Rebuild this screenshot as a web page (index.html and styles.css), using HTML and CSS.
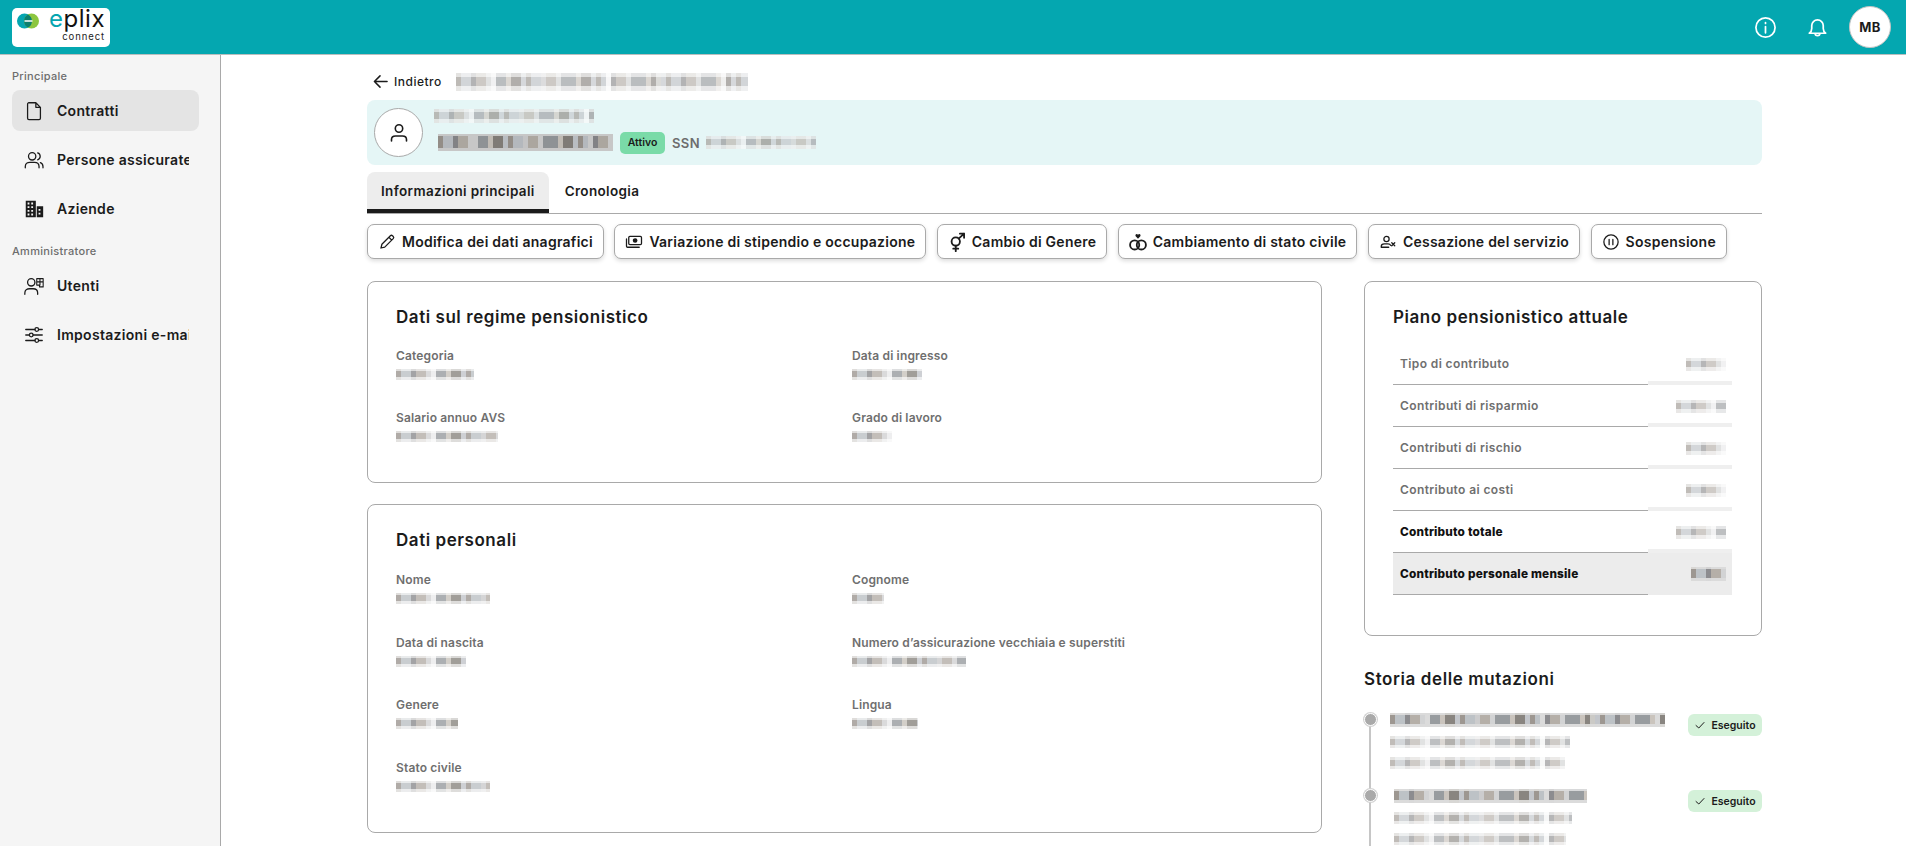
FILE: index.html
```html
<!DOCTYPE html>
<html lang="it">
<head>
<meta charset="utf-8">
<title>eplix connect</title>
<link rel="stylesheet" href="styles.css">
</head>
<body>
<header class="topbar">
  <a class="logo">
    <svg class="logo-mark" viewBox="0 0 22 16" width="22" height="16"><circle cx="7.500" cy="8" r="7.500" fill="#05a5b0"/><circle cx="14.500" cy="8" r="7.500" fill="#8cc63f"/><path d="M11 1.400a7.500 7.500 0 0 1 0 13.200a7.500 7.500 0 0 1 0-13.200z" fill="#0b7f6e"/><path d="M8 8h7" stroke="#fff" stroke-width="1.400"/></svg>
    <span class="logo-words"><span class="logo-name"><span class="logo-e">e</span>plix</span><span class="logo-sub">connect</span></span>
  </a>
  <div class="top-actions">
    <svg class="top-icon top-icon-info" viewBox="0 0 24 24"><circle cx="12" cy="12" r="10"/><path d="M12 11v6.500M12 6.800v1"/></svg>
    <svg class="top-icon" viewBox="0 0 24 24"><path d="M3.500 18c1.500-1.200 2.500-2.500 2.500-5v-3a6 6 0 0 1 12 0v3c0 2.500 1 3.800 2.500 5zM9.500 18a2.500 2.500 0 0 0 5 0"/></svg>
    <span class="avatar-top">MB</span>
  </div>
</header>
<div class="shell">
  <aside class="sidebar">
    <p class="nav-label">Principale</p>
    <nav class="nav-group">
      <a class="nav-item is-active"><svg class="nav-icon" viewBox="0 0 24 24"><path d="M6 3h8l5 5v12a1.500 1.500 0 0 1-1.500 1.500h-11A1.500 1.500 0 0 1 5 20V4.500A1.500 1.500 0 0 1 6 3zM14 3v5h5"/></svg><span class="nav-text">Contratti</span></a>
      <a class="nav-item"><svg class="nav-icon" viewBox="0 0 24 24"><circle cx="10" cy="8" r="4"/><path d="M2.500 20.500v-1.500c0-3 2.500-4.500 5-4.500h5c2.500 0 5 1.500 5 4.500v1.500M16 4.200a4 4 0 0 1 0 7.600M19 14.800c1.700.7 2.800 2.200 2.800 4.200v1.500"/></svg><span class="nav-text">Persone assicurate</span></a>
      <a class="nav-item"><svg class="nav-icon nav-icon-fill" viewBox="0 0 24 24"><path d="M3 3h11v18H3zM15 9h7v12h-7z"/><path class="cut" d="M5 5h2v2H5zM9 5h2v2H9zM5 9h2v2H5zM9 9h2v2H9zM5 13h2v2H5zM9 13h2v2H9zM5 17h2v2H5zM9 17h2v2H9zM17 12h2v2h-2zM17 16h2v2h-2z"/></svg><span class="nav-text">Aziende</span></a>
    </nav>
    <p class="nav-label nav-label-second">Amministratore</p>
    <nav class="nav-group">
      <a class="nav-item"><svg class="nav-icon" viewBox="0 0 24 24"><circle cx="9" cy="8" r="4"/><path d="M2 21v-1.500c0-3 2.500-4.500 5-4.500h4c2.500 0 5 1.500 5 4.500V21"/><path class="thick" d="M15 4h7v9h-4v-2h-3zM18.500 4v7M15 7.500h7"/></svg><span class="nav-text">Utenti</span></a>
      <a class="nav-item"><svg class="nav-icon" viewBox="0 0 24 24"><path d="M3 6h10M17 6h4M3 12h4M11 12h10M3 18h10M17 18h4"/><circle cx="15" cy="6" r="2"/><circle cx="9" cy="12" r="2"/><circle cx="15" cy="18" r="2"/></svg><span class="nav-text">Impostazioni e-mail</span></a>
    </nav>
  </aside>
  <main class="main">
    <div class="content">
      <div class="crumbs">
        <a class="back"><svg class="back-icon" viewBox="0 0 16 16"><path d="M15 8H1.500M7.500 2l-6 6 6 6"/></svg>Indietro</a>
        <span class="mosaic mosaic-crumb"></span>
      </div>
      <section class="person">
        <span class="person-avatar"><svg viewBox="0 0 24 24" width="24" height="24"><circle cx="12" cy="7.500" r="3.700"/><path d="M4.500 20v-1.500c0-2.500 2-3.500 4-3.500h7c2 0 4 1 4 3.500V20"/></svg></span>
        <div class="person-info">
          <span class="mosaic mosaic-soft mosaic-sub"></span>
          <div class="person-line">
            <span class="mosaic mosaic-strong mosaic-name"></span>
            <span class="pill-active">Attivo</span>
            <span class="ssn">SSN</span>
            <span class="mosaic mosaic-soft mosaic-ssn"></span>
          </div>
        </div>
      </section>
      <div class="tabs">
        <a class="tab is-current">Informazioni principali</a>
        <a class="tab">Cronologia</a>
      </div>
      <div class="actions">
        <button class="btn"><svg class="btn-icon" viewBox="0 0 24 24"><path d="M4 20l1.200-5L16.500 3.700a2 2 0 0 1 2.800 0l1 1a2 2 0 0 1 0 2.800L9 18.800zM14.500 5.700l3.800 3.800"/></svg>Modifica dei dati anagrafici</button>
        <button class="btn"><svg class="btn-icon" viewBox="0 0 24 24"><rect x="5" y="4.500" width="17" height="11" rx="1.500"/><circle cx="13.500" cy="10" r="2.300" fill="#1b1b1b"/><path d="M2 8v9.500a1.500 1.500 0 0 0 1.500 1.500H19"/></svg>Variazione di stipendio e occupazione</button>
        <button class="btn"><svg class="btn-icon btn-icon-bold" viewBox="0 0 24 24"><circle cx="10.500" cy="11.500" r="5"/><path d="M14 8L20.500 2M15.500 2h5v5M10.500 16.500V23M7.500 20h6"/></svg>Cambio di Genere</button>
        <button class="btn"><svg class="btn-icon btn-icon-bold" viewBox="0 0 24 24"><circle cx="8" cy="15.500" r="5.500"/><circle cx="16" cy="15.500" r="5.500"/><path class="heart" d="M12 8L9.200 5c-1-1.500.9-3.500 2.800-1.800C13.900 1.500 15.800 3.500 14.800 5z"/></svg>Cambiamento di stato civile</button>
        <button class="btn"><svg class="btn-icon" viewBox="0 0 24 24"><circle cx="10" cy="8" r="3.500"/><path d="M3 19v-1c0-2.500 2.500-3.500 4-3.500h5c1.500 0 3 .5 3.500 2M3 19h10M17 13l4 4M21 13l-4 4"/></svg>Cessazione del servizio</button>
        <button class="btn"><svg class="btn-icon" viewBox="0 0 24 24"><circle cx="12" cy="12" r="9.500"/><path d="M9.500 8.500v7M14.500 8.500v7"/></svg>Sospensione</button>
      </div>
      <div class="columns">
        <div class="col-left">
          <section class="card card-regime">
            <h2 class="card-title">Dati sul regime pensionistico</h2>
            <div class="fields">
              <div class="field"><span class="field-label">Categoria</span><span class="mosaic mosaic-value mv-78"></span></div>
              <div class="field"><span class="field-label">Data di ingresso</span><span class="mosaic mosaic-value mv-70"></span></div>
              <div class="field"><span class="field-label">Salario annuo AVS</span><span class="mosaic mosaic-value mv-102"></span></div>
              <div class="field"><span class="field-label">Grado di lavoro</span><span class="mosaic mosaic-value mv-40"></span></div>
            </div>
          </section>
          <section class="card card-personal">
            <h2 class="card-title">Dati personali</h2>
            <div class="fields">
              <div class="field"><span class="field-label">Nome</span><span class="mosaic mosaic-value mv-94"></span></div>
              <div class="field"><span class="field-label">Cognome</span><span class="mosaic mosaic-value mv-32"></span></div>
              <div class="field"><span class="field-label">Data di nascita</span><span class="mosaic mosaic-value mv-70"></span></div>
              <div class="field"><span class="field-label">Numero d’assicurazione vecchiaia e superstiti</span><span class="mosaic mosaic-value mv-114"></span></div>
              <div class="field"><span class="field-label">Genere</span><span class="mosaic mosaic-value mv-62"></span></div>
              <div class="field"><span class="field-label">Lingua</span><span class="mosaic mosaic-value mv-66"></span></div>
              <div class="field"><span class="field-label">Stato civile</span><span class="mosaic mosaic-value mv-94"></span></div>
            </div>
          </section>
        </div>
        <div class="col-right">
          <section class="card card-plan">
            <h2 class="card-title">Piano pensionistico attuale</h2>
            <div class="plan">
              <div class="plan-row"><span class="plan-label">Tipo di contributo</span><span class="plan-value"><span class="mosaic mosaic-soft pv-40"></span></span></div>
              <div class="plan-row"><span class="plan-label">Contributi di risparmio</span><span class="plan-value"><span class="mosaic mosaic-soft pv-50"></span></span></div>
              <div class="plan-row"><span class="plan-label">Contributi di rischio</span><span class="plan-value"><span class="mosaic mosaic-soft pv-40"></span></span></div>
              <div class="plan-row"><span class="plan-label">Contributo ai costi</span><span class="plan-value"><span class="mosaic mosaic-soft pv-40"></span></span></div>
              <div class="plan-row is-total"><span class="plan-label">Contributo totale</span><span class="plan-value"><span class="mosaic mosaic-soft pv-50"></span></span></div>
              <div class="plan-row is-total is-shaded"><span class="plan-label">Contributo personale mensile</span><span class="plan-value"><span class="mosaic mosaic-strong pv-35"></span></span></div>
            </div>
          </section>
          <h2 class="history-title">Storia delle mutazioni</h2>
          <ul class="timeline">
            <li class="event">
              <span class="event-dot"></span>
              <div class="event-body">
                <span class="mosaic mosaic-strong ev-275"></span>
                <span class="mosaic mosaic-soft ev-180"></span>
                <span class="mosaic mosaic-soft ev-175"></span>
              </div>
              <span class="pill-done"><svg viewBox="0 0 12 12" width="12" height="12"><path d="M2 6.500l2.800 2.500L10 3.500"/></svg>Eseguito</span>
            </li>
            <li class="event event-second">
              <span class="event-dot"></span>
              <div class="event-body">
                <span class="mosaic mosaic-strong ev-193"></span>
                <span class="mosaic mosaic-soft ev-178"></span>
                <span class="mosaic mosaic-soft ev-172"></span>
              </div>
              <span class="pill-done"><svg viewBox="0 0 12 12" width="12" height="12"><path d="M2 6.500l2.800 2.500L10 3.500"/></svg>Eseguito</span>
            </li>
          </ul>
        </div>
      </div>
    </div>
  </main>
</div>
</body>
</html>
```
FILE: styles.css
```css
* { box-sizing: border-box; }
html, body { height: 100%; }
body {
  margin: 0;
  height: 846px;
  overflow: hidden;
  display: flex;
  flex-direction: column;
  background: #fff;
  color: #1b1b1b;
  font-family: "Inter", "Noto Sans", sans-serif;
  font-weight: 500;
  font-size: 14px;
}
p, h2, ul { margin: 0; padding: 0; }
svg { fill: none; stroke: #1b1b1b; stroke-width: 1.6; stroke-linecap: round; stroke-linejoin: round; flex: none; }

/* top bar */
.topbar {
  flex: none;
  height: 55px;
  background: #04a7b0;
  border-bottom: 1px solid #b9bebe;
  display: flex;
  align-items: center;
  justify-content: space-between;
  padding: 0 12px;
}
.logo {
  width: 98px;
  height: 39px;
  background: #fff;
  border-radius: 5px;
  display: flex;
  align-items: flex-start;
  gap: 7px;
  padding: 0 5px;
}
.logo-mark { stroke: none; margin-top: 5px; }
.logo-mark path:last-child { stroke: #fff; }
.logo-words { display: flex; flex-direction: column; align-items: flex-end; width: 60px; }
.logo-name { font-weight: 400; font-size: 24px; line-height: 22px; letter-spacing: .5px; color: #111; }
.logo-e { color: #05a5b0; }
.logo-sub { margin-top: 2px; font-size: 9.500px; line-height: 10px; font-weight: 400; letter-spacing: .9px; color: #222; }
.top-actions { display: flex; align-items: center; gap: 20px; padding-right: 3px; }
.top-icon { width: 23px; height: 23px; stroke: #fff; stroke-width: 1.8; }
.top-icon-info { margin-right: 9px; }
.avatar-top {
  width: 42px;
  height: 42px;
  border-radius: 50%;
  background: #fff;
  border: 1px solid #c4c4c4;
  display: flex;
  align-items: center;
  justify-content: center;
  font-weight: 700;
  font-size: 13px;
  letter-spacing: .5px;
}

/* shell */
.shell { flex: 1; min-height: 0; display: flex; }
.sidebar {
  flex: none;
  width: 221px;
  background: #f5f5f5;
  border-right: 1px solid #a9a9a9;
  padding: 13px 21px 0 12px;
}
.nav-label { font-size: 11px; line-height: 16px; color: #6d6d6d; letter-spacing: .3px; margin-bottom: 6px; }
.nav-label-second { margin-top: 14px; margin-bottom: 6px; }
.nav-group { display: flex; flex-direction: column; gap: 8px; }
.nav-item {
  height: 41px;
  border-radius: 8px;
  display: flex;
  align-items: center;
  padding-left: 11px;
  gap: 12px;
  overflow: hidden;
}
.nav-item.is-active { background: #e4e4e4; }
.nav-icon { width: 22px; height: 22px; stroke-width: 1.4; }
.nav-icon-fill { fill: #1b1b1b; stroke: none; }
.nav-icon-fill .cut { fill: #f5f5f5; }
.thick { stroke-width: 1.2; }
.nav-text {
  font-size: 14px;
  font-weight: 600;
  letter-spacing: .3px;
  white-space: nowrap;
  overflow: hidden;
  width: 132px;
}

/* main */
.main { flex: 1; min-width: 0; overflow: hidden; padding-left: 146px; }
.content { width: 1395px; }
.crumbs { height: 45px; display: flex; align-items: center; gap: 14px; padding: 8px 0 0 6px; }
.back { display: flex; align-items: center; gap: 6px; font-size: 12px; letter-spacing: .5px; }
.back-icon { width: 15px; height: 15px; }
.person {
  height: 65px;
  background: #e5f6f6;
  border-radius: 8px;
  display: flex;
  align-items: center;
  padding-left: 7px;
  gap: 11px;
}
.person-avatar {
  width: 49px;
  height: 49px;
  border-radius: 50%;
  background: #fff;
  border: 1px solid #a9a9a9;
  display: flex;
  align-items: center;
  justify-content: center;
}
.person-info { display: flex; flex-direction: column; gap: 9px; padding-bottom: 3px; }
.person-line { display: flex; align-items: center; padding-left: 4px; gap: 7px; height: 22px; }
.pill-active {
  width: 45px;
  height: 22px;
  background: #7adba8;
  border-radius: 5px;
  display: flex;
  align-items: center;
  justify-content: center;
  font-size: 10.500px;
  font-weight: 600;
}
.ssn { color: #6d6d6d; font-weight: 600; font-size: 13px; letter-spacing: .4px; }

/* pixelated redactions */
.mosaic {
  --edge-top: 22%;
  --edge-bottom: 72%;
  display: block;
  height: 14px;
  flex: none;
  background-color: #e4e5e5;
  background-image:
    repeating-linear-gradient(90deg, rgba(255,255,255,0) 0 35px, rgba(255,255,255,.8) 35px 40px, rgba(255,255,255,0) 40px 85px, rgba(255,255,255,.55) 85px 90px, rgba(255,255,255,0) 90px 115px),
    linear-gradient(180deg, rgba(255,255,255,.6) 0 var(--edge-top), rgba(255,255,255,0) var(--edge-top) var(--edge-bottom), rgba(255,255,255,.65) var(--edge-bottom)),
    repeating-linear-gradient(90deg, #a8a39e 0 5px, #c4c8cc 5px 15px, #9a9a9c 15px 20px, #bdb8b2 20px 30px, #d6d7d8 30px 35px, #a4a7aa 35px 50px, #cfcac4 50px 55px, #97948f 55px 65px, #c9ccd0 65px 70px);
}
.mosaic-soft { opacity: .72; }
.mosaic-strong { --edge-top: 12%; --edge-bottom: 82%; filter: contrast(1.35) brightness(.86); }
.mosaic-crumb { width: 292px; height: 18px; opacity: .75; }
.mosaic-sub { width: 160px; height: 14px; }
.mosaic-name { width: 175px; height: 17px; filter: contrast(1.5) brightness(.78); }
.mosaic-ssn { width: 110px; height: 13px; margin-left: -1px; }
.mosaic-value { height: 11px; opacity: .9; }
.mv-32 { width: 32px; }
.mv-40 { width: 40px; }
.mv-62 { width: 62px; }
.mv-66 { width: 66px; }
.mv-70 { width: 70px; }
.mv-78 { width: 78px; }
.mv-94 { width: 94px; }
.mv-102 { width: 102px; }
.mv-114 { width: 114px; }
.pv-35 { width: 35px; height: 14px; }
.pv-40 { width: 40px; height: 13px; }
.pv-50 { width: 50px; height: 13px; }
.ev-275 { width: 275px; height: 14px; }
.ev-180 { width: 180px; height: 12px; }
.ev-175 { width: 175px; height: 12px; }
.ev-193 { width: 193px; height: 14px; }
.ev-178 { width: 178px; height: 12px; }
.ev-172 { width: 172px; height: 12px; }

/* tabs */
.tabs { margin-top: 7px; height: 42px; display: flex; gap: 2px; border-bottom: 1px solid #a9a9a9; }
.tab {
  height: 41px;
  padding: 0 14px;
  display: flex;
  align-items: center;
  font-weight: 600;
  font-size: 13.500px;
  letter-spacing: .35px;
  border-radius: 8px 8px 0 0;
  border-bottom: 4px solid transparent;
  white-space: nowrap;
}
.tab.is-current { background: #ededed; border-bottom-color: #1b1b1b; }

/* action buttons */
.actions { margin-top: 10px; display: flex; gap: 10.500px; }
.btn {
  height: 35px;
  padding: 0 10px;
  border: 1px solid #a9a9a9;
  border-radius: 7px;
  background: #fff;
  box-shadow: 0 2px 4px rgba(0,0,0,.14);
  display: flex;
  align-items: center;
  gap: 6px;
  font: inherit;
  font-weight: 600;
  font-size: 14px;
  letter-spacing: .25px;
  color: #1b1b1b;
  white-space: nowrap;
}
.btn-icon { width: 18px; height: 18px; stroke-width: 1.7; }
.btn-icon-bold { width: 20px; height: 20px; stroke-width: 2.2; margin-left: -1px; margin-right: -1px; }
.heart { fill: #1b1b1b; stroke: none; }

/* columns */
.columns { margin-top: 22px; display: grid; grid-template-columns: 955px 398px; column-gap: 42px; }
.col-left { display: flex; flex-direction: column; gap: 21px; }
.card { border: 1px solid #a9a9a9; border-radius: 8px; padding: 24px 28px 0; background: #fff; }
.card-regime { height: 202px; }
.card-personal { height: 329px; }
.card-plan { height: 355px; }
.card-title { font-size: 17px; line-height: 22px; font-weight: 600; letter-spacing: .55px; }
.fields { margin-top: 19px; display: grid; grid-template-columns: 1fr 1fr; column-gap: 15px; row-gap: 24px; }
.card-personal .fields { margin-top: 20px; row-gap: 24.600px; }
.field { display: flex; flex-direction: column; gap: 4px; height: 38px; }
.field-label { font-size: 12px; line-height: 18px; color: #6f6f6f; font-weight: 600; letter-spacing: .15px; }

/* plan table */
.plan { margin-top: 15px; }
.plan-row { height: 42px; display: grid; grid-template-columns: 255px 84px; }
.plan-label {
  display: flex;
  align-items: center;
  padding: 0 0 0 7px;
  border-bottom: 1px solid #a9a9a9;
  color: #6f6f6f;
  font-size: 12px;
  font-weight: 600;
  letter-spacing: .38px;
}
.plan-value {
  display: flex;
  align-items: center;
  justify-content: flex-end;
  padding-right: 6px;
  box-shadow: inset 0 -4px 0 #efefef;
}
.is-total .plan-label { color: #111; font-weight: 800; font-size: 11.800px; letter-spacing: .2px; }
.is-shaded .plan-label, .is-shaded .plan-value { background: #ececec; }
.is-shaded .plan-value { box-shadow: none; }

/* history */
.history-title { margin-top: 32px; font-size: 17px; line-height: 22px; font-weight: 600; letter-spacing: .6px; }
.timeline { list-style: none; margin-top: 23px; }
.event { position: relative; display: grid; grid-template-columns: 1fr 74px; align-items: start; height: 76px; padding-left: 26px; }
.event-second { padding-left: 30px; }
.event::before { content: ""; position: absolute; left: 5px; top: 13px; width: 2px; height: 63px; background: #c6c6c6; }
.event-dot {
  position: absolute;
  left: 0;
  top: 0;
  width: 13px;
  height: 13px;
  border-radius: 50%;
  background: #a9a9a9;
  border: 1px solid #fff;
  box-shadow: 0 0 0 1px #d2d2d2;
}
.event-body { display: flex; flex-direction: column; gap: 9px; }
.pill-done {
  height: 22px;
  margin-top: 1px;
  background: #d4f1d9;
  border-radius: 6px;
  display: flex;
  align-items: center;
  justify-content: center;
  gap: 5px;
  font-size: 10.500px;
  font-weight: 600;
}
.pill-done svg { stroke-width: 1; }
```
